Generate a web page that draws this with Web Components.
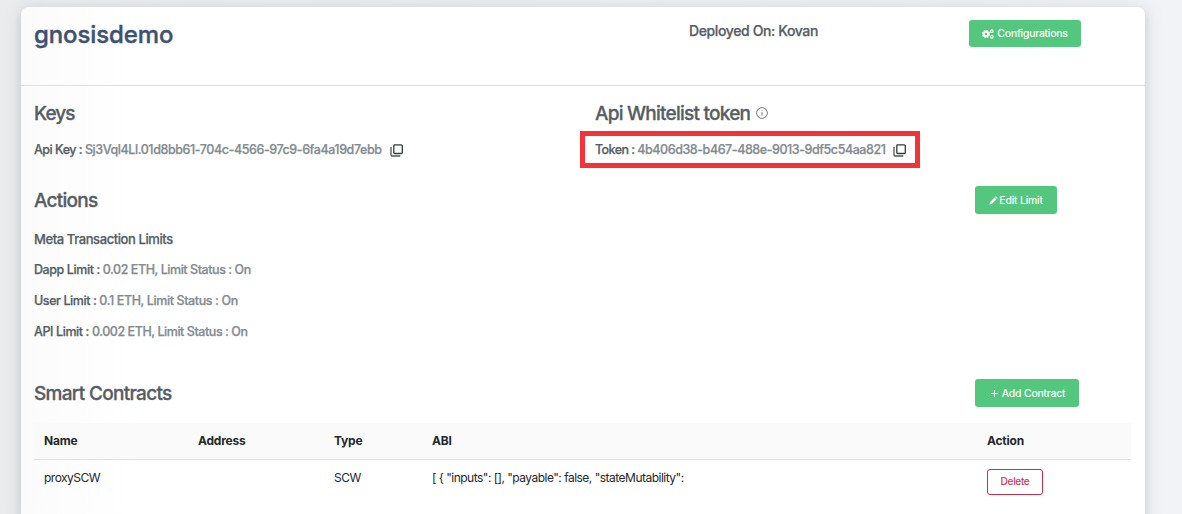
<!DOCTYPE html>
<html lang="en">
<head>
<meta charset="utf-8">
<title>gnosisdemo</title>
<style>
html,body{margin:0;height:100%;overflow:hidden;background:#edeff2}
body{font-family:Inter,"Liberation Sans",sans-serif}
</style>
</head>
<body>
<dapp-page></dapp-page>
<script>
const define = (name, html, setup) => customElements.define(name, class extends HTMLElement {
  constructor() {
    super();
    this.attachShadow({mode: 'open'}).innerHTML = html;
    if (setup) setup(this);
  }
});

define('ui-icon', `<style>:host{display:inline-flex;flex:none}svg{display:block;width:100%;height:100%;overflow:visible}</style><svg></svg>`, el => {
  const shapes = {
    copy: ['0 0 13 13', '<path d="M4.2 .8h7.1a1 1 0 0 1 1 1v6.7a1 1 0 0 1-1 1H4.8a1 1 0 0 1-1-1V1.8z" fill="none" stroke="#343a3e" stroke-width="1.3"/><path d="M1 3v8a1 1 0 0 0 1 1h8.3" fill="none" stroke="#50565a" stroke-width="1.3"/>'],
    info: ['0 0 12 12', '<circle cx="6" cy="6" r="5.4" fill="none" stroke="#777c80" stroke-width="1"/><path d="M6 5.2v3.5M6 3.1v1" stroke="#777c80" stroke-width="1"/>'],
    gears: ['0 0 12 10', '<circle cx="4" cy="5" r="2.2" fill="none" stroke="#fff" stroke-width="2"/><circle cx="4" cy="5" r="3.4" fill="none" stroke="#fff" stroke-width="1.3" stroke-dasharray="1.6 1.07"/><circle cx="9.8" cy="2.2" r="1.35" fill="none" stroke="#fff" stroke-width="1.1"/><circle cx="9.8" cy="7.8" r="1.35" fill="none" stroke="#fff" stroke-width="1.1"/>'],
    pencil: ['0 0 9 9', '<path d="M.4 8.6l.6-2.4L5.6 1.6l1.8 1.8L2.8 8zM6.1 1.1l.8-.8 1.8 1.8-.8.8z" fill="#fff"/>'],
    plus: ['0 0 7 7', '<path d="M3.5 0v7M0 3.5h7" stroke="#fff" stroke-width="1"/>']
  };
  const [box, body] = shapes[el.getAttribute('name')];
  const svg = el.shadowRoot.querySelector('svg');
  svg.setAttribute('viewBox', box);
  svg.innerHTML = body;
});

define('ui-button', `<style>
:host{display:inline-flex;box-sizing:border-box;height:28px;align-items:center;justify-content:center;background:#52c77d;color:#fff;border-radius:3px;font-size:10.5px;letter-spacing:-.2px;white-space:pre;-webkit-text-stroke:.15px}
:host([outline]){background:#fff;color:#cb2f4c;border:1px solid #cb2f4c;height:26px;font-size:10px;letter-spacing:-.25px;padding-bottom:2px}
</style><slot></slot>`);

define('data-line', `<style>
:host{display:flex;align-items:center;font-size:12.5px;font-weight:500;line-height:16px;letter-spacing:-.44px;color:#848b91;white-space:pre;-webkit-text-stroke:.25px}
slot[name=label]{color:#565d65;letter-spacing:-.41px}
::slotted(ui-icon){width:13px;height:13px;margin:0 0 0 8px}
</style><slot name="label"></slot><slot></slot>`);

define('section-title', `<style>:host{display:flex;align-items:center;font-size:19px;font-weight:500;line-height:24px;letter-spacing:-.76px;color:#565d65;white-space:pre;-webkit-text-stroke:.3px}</style><slot></slot>`);

define('contracts-table', `<style>
:host{display:block;color:#24282c;font-size:12px}
.row{display:grid;grid-template-columns:154px 136px 98px 555px 1fr;padding-left:10px;box-sizing:border-box;white-space:pre}
.head{height:37px;background:#fafafa;border-bottom:1px solid #dee1e4;font-weight:700;letter-spacing:-.22px;align-items:center;padding-bottom:2px}
.body{padding-top:9px;line-height:18px;letter-spacing:-.51px}
ui-button{width:56px}
</style>
<div class="row head"><div>Name</div><div>Address</div><div>Type</div><div>ABI</div><div>Action</div></div>
<div class="row body"><div>proxySCW</div><div></div><div>SCW</div><div>[ { "inputs": [], "payable": false, "stateMutability":</div><div><ui-button outline>Delete</ui-button></div></div>`);

define('dapp-page', `<style>
:host{display:block;height:514px;overflow:hidden;padding:7px 37px 0 21px;box-sizing:border-box;background:linear-gradient(90deg,#ebecee,#eeeff2 50%,#f2f3f6)}
.card{height:540px;border-radius:8px;box-shadow:0 0 20px rgba(40,50,60,.10),0 4px 8px rgba(40,50,60,.14);background:linear-gradient(90deg,#fbfbfb,#fff 110px)}
header{display:grid;grid-template-columns:655px 280px 1fr;box-sizing:border-box;height:79px;padding-left:13px;border-bottom:1px solid #dde0e7}
h1{margin:12px 0 0;font-size:24px;line-height:32px;font-weight:500;letter-spacing:-.1px;color:#3d5273;-webkit-text-stroke:.4px}
.deployed{margin-top:15px;font-size:14px;line-height:18px;font-weight:500;letter-spacing:-.38px;color:#565d65;-webkit-text-stroke:.25px}
header ui-button{width:112px;height:27px;margin-top:13px}
main{padding:0 14px 0 13px}
.keys{display:grid;grid-template-columns:561px 1fr;padding-top:16px;height:100px;box-sizing:border-box;align-items:start}
.keys data-line{margin-top:16px;letter-spacing:-.42px}
.keys data-line [slot=label]{letter-spacing:-.5px}
.token{width:340px;height:37px;box-sizing:border-box;border:5px solid #f2343a;margin:5px 0 0 -15px;padding:0 10px}
.keys .token data-line{margin:6px 0 0;letter-spacing:-.44px}
.keys .token [slot=label]{letter-spacing:-.56px}
.bar{display:flex;height:28px;align-items:center}
.bar section-title{width:941px;padding-top:2px}
.limits{padding-top:17px;height:165px;box-sizing:border-box}
.limits data-line{margin-bottom:15px}
.limits data-line:first-child{margin-bottom:15px;font-size:13px}
.smart{letter-spacing:-.69px}
contracts-table{margin-top:16px}
</style>
<div class="card">
<header><h1>gnosisdemo</h1><div class="deployed">Deployed On: Kovan</div><ui-button><ui-icon name="gears" style="width:12px;height:10px;margin-right:3px"></ui-icon><span>Configurations</span></ui-button></header>
<main>
<div class="keys">
<div><section-title style="letter-spacing:-.9px">Keys</section-title><data-line><span slot="label">Api Key : </span><span>Sj3Vql4Ll.01d8bb61-704c-4566-97c9-6fa4a19d7ebb</span><ui-icon name="copy"></ui-icon></data-line></div>
<div><section-title><span>Api Whitelist token</span><ui-icon name="info" style="width:12px;height:12px;margin:-2px 0 0 6px"></ui-icon></section-title><div class="token"><data-line><span slot="label">Token : </span><span>4b406d38-b467-488e-9013-9df5c54aa821</span><ui-icon name="copy"></ui-icon></data-line></div></div>
</div>
<div class="bar"><section-title>Actions</section-title><ui-button style="width:82px"><ui-icon name="pencil" style="width:9px;height:9px;margin-right:1px"></ui-icon><span>Edit Limit</span></ui-button></div>
<div class="limits">
<data-line><span slot="label">Meta Transaction Limits</span></data-line>
<data-line><span slot="label">Dapp Limit : </span><span>0.02 ETH, Limit Status : On</span></data-line>
<data-line><span slot="label">User Limit : </span><span style="letter-spacing:-.39px">0.1 ETH, Limit Status : On</span></data-line>
<data-line><span slot="label">API Limit : </span><span>0.002 ETH, Limit Status : On</span></data-line>
</div>
<div class="bar"><section-title class="smart">Smart Contracts</section-title><ui-button style="width:104px;padding-left:2px"><ui-icon name="plus" style="width:7px;height:7px;margin-right:4px"></ui-icon><span>Add Contract</span></ui-button></div>
<contracts-table></contracts-table>
</main>
</div>`);
</script>
</body>
</html>
